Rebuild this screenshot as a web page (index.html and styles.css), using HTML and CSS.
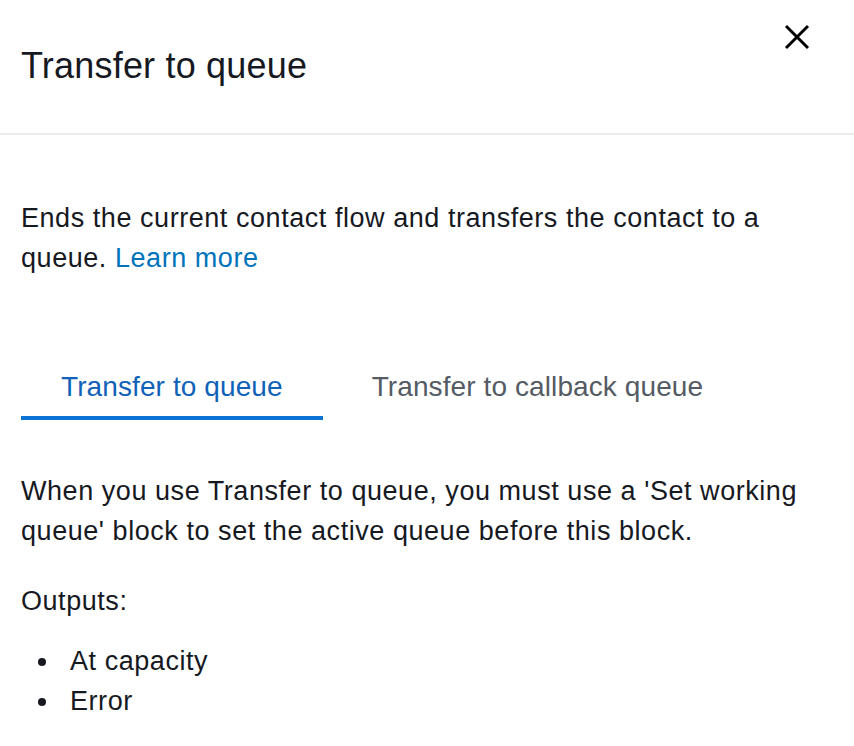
FILE: index.html
```html
<!DOCTYPE html>
<html>
<head>
<meta charset="utf-8">
<link rel="stylesheet" href="styles.css">
</head>
<body>
<div class="panel">
  <header class="header">
    <h1 class="title">Transfer to queue</h1>
    <button class="close" aria-label="Close">
      <svg width="26" height="26" viewBox="0 0 26 26"><path d="M2 2 L24 24 M24 2 L2 24" stroke="#000" stroke-width="3" fill="none"/></svg>
    </button>
  </header>
  <main class="content">
    <p class="intro">Ends the current contact flow and transfers the contact to a queue. <a class="link" href="#">Learn more</a></p>
    <div class="tabs">
      <div class="tab active">Transfer to queue</div>
      <div class="tab">Transfer to callback queue</div>
    </div>
    <p class="desc">When you use Transfer to queue, you must use a 'Set working queue' block to set the active queue before this block.</p>
    <p class="outputs">Outputs:</p>
    <ul class="list">
      <li>At capacity</li>
      <li>Error</li>
    </ul>
  </main>
</div>
</body>
</html>
```

FILE: styles.css
```css
html, body {
  margin: 0;
  padding: 0;
  background: #ffffff;
}
body {
  font-family: "Liberation Sans", Arial, sans-serif;
  color: #16191f;
}
.panel {
  width: 854px;
}
.header {
  display: flex;
  justify-content: space-between;
  align-items: flex-start;
  height: 133px;
  border-bottom: 2px solid #eaeded;
  padding: 0 0 0 21px;
  box-sizing: content-box;
}
.title {
  margin: 44px 0 0 0;
  font-size: 36px;
  font-weight: 400;
  line-height: 44px;
  letter-spacing: 0.2px;
  color: #16191f;
}
.close {
  margin: 24px 44px 0 0;
  padding: 0;
  border: 0;
  background: none;
  width: 26px;
  height: 26px;
}
.content {
  padding: 0 21px;
  font-size: 27px;
  line-height: 40px;
  letter-spacing: 0.55px;
}
.intro {
  margin: 63px 0 0 0;
}
.link {
  color: #0073bb;
  text-decoration: none;
}
.tabs {
  display: flex;
  gap: 9px;
  margin-top: 89px;
}
.tab {
  padding: 0 40px 9px 40px;
  font-size: 28px;
  line-height: 40px;
  letter-spacing: 0.1px;
  color: #545b64;
  border-bottom: 4px solid transparent;
}
.tab.active {
  color: #0f62b8;
  border-bottom-color: #0972d3;
}
.desc {
  margin: 51px 0 0 0;
}
.outputs {
  margin: 30px 0 0 0;
}
.list {
  margin: 20px 0 0 0;
  padding: 0;
  list-style: none;
}
.list li::before {
  content: "";
  display: inline-block;
  width: 8px;
  height: 8px;
  border-radius: 50%;
  background: #16191f;
  margin: 0 24px 0 17px;
  vertical-align: 4px;
}
```
